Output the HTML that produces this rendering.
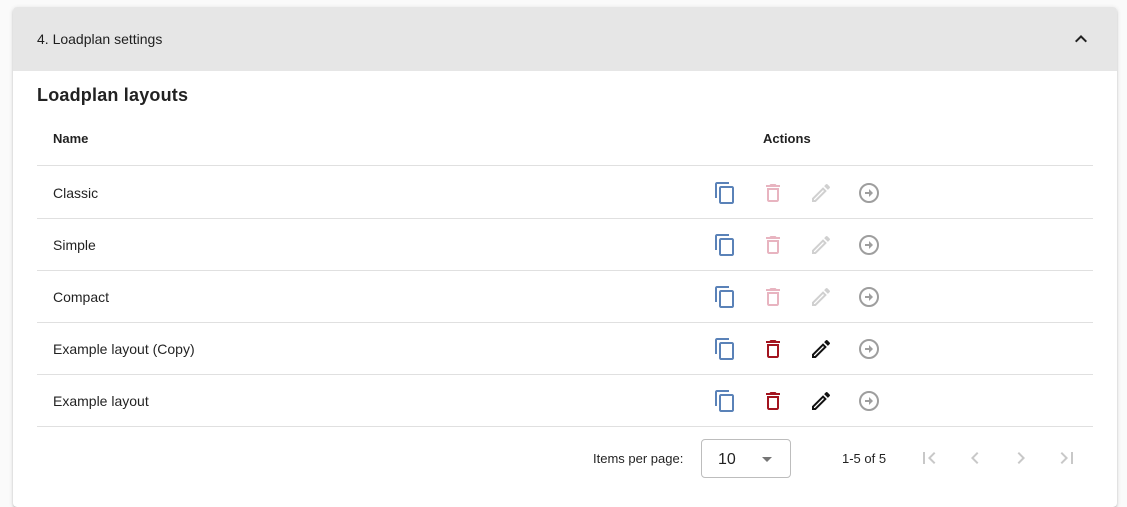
<!DOCTYPE html>
<html><head><meta charset="utf-8"><style>
*{box-sizing:border-box;margin:0;padding:0}
body{width:1127px;height:490px;background:#fafafa;font-family:"Liberation Sans",Roboto,sans-serif;color:rgba(0,0,0,.87);overflow:hidden;position:relative}
.panel{position:absolute;left:13px;top:7px;width:1104px;height:500px;background:#fff;border-radius:4px;box-shadow:0 3px 1px -2px rgba(0,0,0,.2),0 2px 2px 0 rgba(0,0,0,.14),0 1px 5px 0 rgba(0,0,0,.12)}
.hdr{height:64px;background:#e6e6e6;border-radius:4px 4px 0 0;position:relative;font-size:14px;padding-left:24px;line-height:64px}
.hdr svg{position:absolute;right:24px;top:20px}
h2{position:absolute;left:24px;top:78px;font-size:18px;font-weight:bold;letter-spacing:.2px;color:#222}
.t{position:absolute;left:24px;top:104px;width:1056px}
.row{height:52px;border-bottom:1px solid #e0e0e0;position:relative;font-size:14px}
.row .n{position:absolute;left:16px;top:0;line-height:52px}
.th{height:55px;font-size:13px;font-weight:bold}
.th .n{line-height:55px}
.th .a{position:absolute;left:726px;line-height:55px}
.ic{position:absolute;top:14px}
.pg{position:absolute;top:432px;font-size:13px}
</style></head><body>
<div class="panel">
<div class="hdr">4. Loadplan settings<svg width="24" height="24" viewBox="0 0 24 24"><path d="M7.41 15.41L12 10.83l4.59 4.58L18 14l-6-6-6 6z" fill="#222"/></svg></div>
<h2>Loadplan layouts</h2>
<div class="t">
<div class="row th"><span class="n">Name</span><span class="a">Actions</span></div>
</div>
</div>
<div id="rows" style="position:absolute;left:37px;top:167px;width:1056px"></div>
<div class="pg" style="left:593px;top:451px">Items per page:</div>
<div style="position:absolute;left:701px;top:439px;width:90px;height:39px;border:1px solid #bdbdbd;border-radius:4px"><span style="position:absolute;left:16px;top:11px;font-size:16px">10</span><span style="position:absolute;left:60px;top:17px;border-left:5px solid transparent;border-right:5px solid transparent;border-top:5px solid #757575"></span></div>
<div class="pg" style="left:842px;top:451px">1-5 of 5</div>
<svg style="position:absolute;left:917px;top:446px" width="24" height="24" viewBox="0 0 24 24"><path d="M18.41 16.59L13.82 12l4.59-4.59L17 6l-6 6 6 6zM6 6h2v12H6z" fill="#c8c8c8"/></svg>
<svg style="position:absolute;left:963px;top:446px" width="24" height="24" viewBox="0 0 24 24"><path d="M15.41 7.41L14 6l-6 6 6 6 1.41-1.41L10.83 12z" fill="#c8c8c8"/></svg>
<svg style="position:absolute;left:1009px;top:446px" width="24" height="24" viewBox="0 0 24 24"><path d="M10 6L8.59 7.41 13.17 12l-4.58 4.59L10 18l6-6z" fill="#c8c8c8"/></svg>
<svg style="position:absolute;left:1055px;top:446px" width="24" height="24" viewBox="0 0 24 24"><path d="M5.59 7.41L10.18 12l-4.59 4.59L7 18l6-6-6-6zM16 6h2v12h-2z" fill="#c8c8c8"/></svg>
<script>
var names=["Classic","Simple","Compact","Example layout (Copy)","Example layout"];
var h="";
names.forEach(function(n,i){
var en=i>=3;var del=en?"#a3141f":"#e8b4c0";var ed=en?"#111":"#d0d0d0";
h+='<div class="row"><span class="n">'+n+'</span>'+
'<svg class="ic" style="left:676px" width="24" height="24" viewBox="0 0 24 24"><path d="M16 1H4c-1.1 0-2 .9-2 2v14h2V3h12V1zm3 4H8c-1.1 0-2 .9-2 2v14c0 1.1.9 2 2 2h11c1.1 0 2-.9 2-2V7c0-1.1-.9-2-2-2zm0 16H8V7h11v14z" fill="#5a82b8"/></svg>'+
'<svg class="ic" style="left:724px" width="24" height="24" viewBox="0 0 24 24"><path d="M16 9v10H8V9h8m-1.5-6h-5l-1 1H5v2h14V4h-3.5l-1-1zM18 7H6v12c0 1.1.9 2 2 2h8c1.1 0 2-.9 2-2V7z" fill="'+del+'"/></svg>'+
'<svg class="ic" style="left:772px" width="24" height="24" viewBox="0 0 24 24"><path d="M3 17.25V21h3.75L17.81 9.94l-3.75-3.75L3 17.25zM5.92 19H5v-.92l9.06-9.06.92.92L5.92 19zM20.71 5.63l-2.34-2.34a1 1 0 0 0-1.41 0l-1.830 1.83 3.75 3.75 1.83-1.83a1 1 0 0 0 0-1.41z" fill="'+ed+'"/></svg>'+
'<svg class="ic" style="left:820px" width="24" height="24" viewBox="0 0 24 24"><circle cx="12" cy="12" r="9" fill="none" stroke="#9e9e9e" stroke-width="2"/><path d="M8 11h4V8l4 4-4 4v-3H8z" fill="#9e9e9e"/></svg></div>';
});
document.getElementById("rows").innerHTML=h;
</script>
</body></html>
